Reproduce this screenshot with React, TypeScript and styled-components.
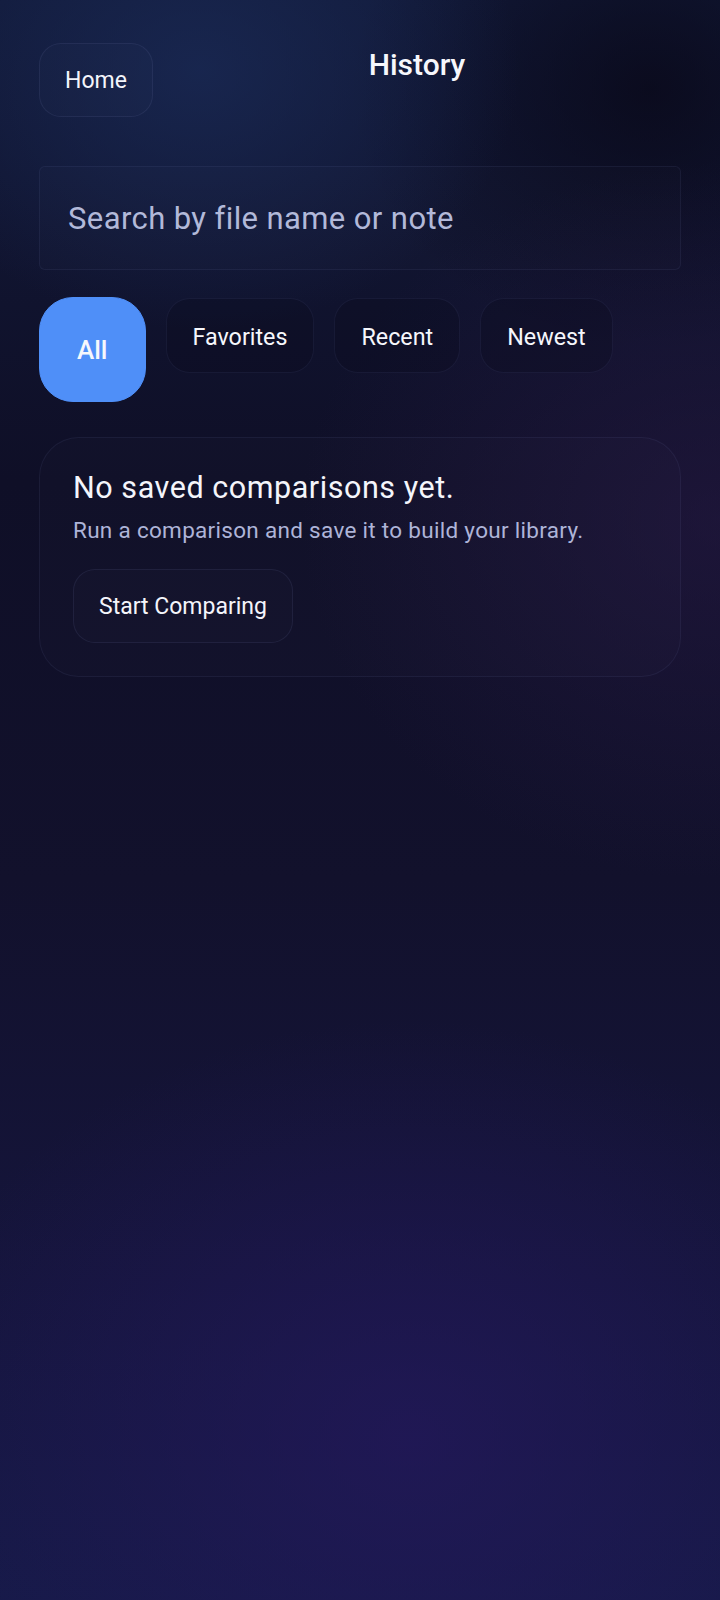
import React, { useState } from "react";
import styled, { createGlobalStyle } from "styled-components";

const GlobalStyle = createGlobalStyle`
  html, body {
    margin: 0;
    padding: 0;
    background: #121130;
  }
  * {
    box-sizing: border-box;
  }
  body {
    font-family: Roboto, "Noto Sans", "Liberation Sans", sans-serif;
    -webkit-font-smoothing: antialiased;
  }
`;

const FILTERS = ["All", "Favorites", "Recent", "Newest"];

const App = () => {
  const [filter, setFilter] = useState("All");
  const [query, setQuery] = useState("");

  return (
    <>
      <GlobalStyle />
      <StScreen>
        <StHeader>
          <StGhostButton type="button">Home</StGhostButton>
          <StTitle>History</StTitle>
        </StHeader>

        <StSearch
          value={query}
          onChange={(e) => setQuery(e.target.value)}
          placeholder="Search by file name or note"
        />

        <StChipRow>
          {FILTERS.map((name) => (
            <StChip
              key={name}
              type="button"
              $active={filter === name}
              onClick={() => setFilter(name)}
            >
              {name}
            </StChip>
          ))}
        </StChipRow>

        <StEmptyCard>
          <StEmptyTitle>No saved comparisons yet.</StEmptyTitle>
          <StEmptyText>
            Run a comparison and save it to build your library.
          </StEmptyText>
          <StGhostButton type="button">Start Comparing</StGhostButton>
        </StEmptyCard>
      </StScreen>
    </>
  );
};

export default App;

const StScreen = styled.div`
  width: 720px;
  min-height: 1600px;
  padding: 43px 39px 40px;
  display: flex;
  flex-direction: column;
  color: #f4f5fb;
  background:
    radial-gradient(ellipse 320px 260px at 200px 70px, rgba(26, 42, 86, 0.75), transparent 100%),
    radial-gradient(ellipse 420px 360px at 720px 520px, rgba(40, 26, 70, 0.55), transparent 100%),
    radial-gradient(ellipse 520px 420px at 410px 1440px, rgba(36, 24, 92, 0.7), transparent 100%),
    radial-gradient(ellipse 300px 260px at 650px 90px, rgba(8, 6, 20, 0.7), transparent 100%),
    linear-gradient(180deg, #121a3a 0%, #0f0f27 30%, #12112c 55%, #15153c 80%, #161a48 100%);
`;

const StHeader = styled.div`
  display: flex;
  align-items: flex-start;
`;

const StTitle = styled.h1`
  flex: 1;
  margin: 0;
  padding-top: 4px;
  text-align: center;
  font-size: 30px;
  line-height: 36px;
  font-weight: 500;
  color: #f6f7fc;
`;

const StGhostButton = styled.button`
  height: 74px;
  padding: 1px 25px 0;
  display: inline-flex;
  align-items: center;
  align-self: flex-start;
  border: 1.5px solid rgba(120, 130, 190, 0.12);
  border-radius: 22px;
  background: rgba(255, 255, 255, 0.01);
  color: #f4f5fb;
  font-family: inherit;
  font-size: 23px;
  font-weight: 400;
`;

const StSearch = styled.input`
  margin-top: 49px;
  height: 104px;
  width: 100%;
  padding: 0 28px;
  border: 1.5px solid rgba(120, 130, 190, 0.1);
  border-radius: 6px;
  background: rgba(255, 255, 255, 0.012);
  color: #f4f5fb;
  font-family: inherit;
  font-size: 31px;
  letter-spacing: 0.4px;
  outline: none;

  &::placeholder {
    color: #b2b9d9;
  }
`;

const StChipRow = styled.div`
  margin-top: 27px;
  display: flex;
  align-items: flex-start;
  gap: 20px;
`;

const StChip = styled.button<{ $active: boolean }>`
  height: ${({ $active }) => ($active ? "105px" : "75px")};
  margin-top: ${({ $active }) => ($active ? "0" : "1px")};
  padding: ${({ $active }) => ($active ? "0 37px" : "2px 26px 0")};
  border-radius: ${({ $active }) => ($active ? "34px" : "24px")};
  border: 1.5px solid
    ${({ $active }) => ($active ? "#4f8ff8" : "rgba(120, 130, 190, 0.1)")};
  background: ${({ $active }) => ($active ? "#4f8ff8" : "rgba(8, 8, 24, 0.25)")};
  color: #f6f7fc;
  font-family: inherit;
  font-size: ${({ $active }) => ($active ? "26px" : "23.3px")};
  font-weight: ${({ $active }) => ($active ? 500 : 400)};
  display: inline-flex;
  align-items: center;
`;

const StEmptyCard = styled.div`
  margin-top: 35px;
  padding: 30px 33px 33px;
  display: flex;
  flex-direction: column;
  border: 1.5px solid rgba(120, 130, 190, 0.1);
  border-radius: 40px;
  background: rgba(255, 255, 255, 0.012);
`;

const StEmptyTitle = styled.h2`
  margin: 0;
  font-size: 30.5px;
  line-height: 40px;
  letter-spacing: 0.55px;
  font-weight: 400;
  color: #f4f5fb;
`;

const StEmptyText = styled.p`
  margin: 7px 0 24px;
  font-size: 22.5px;
  line-height: 30px;
  letter-spacing: 0.3px;
  color: #aeb4d8;
`;
